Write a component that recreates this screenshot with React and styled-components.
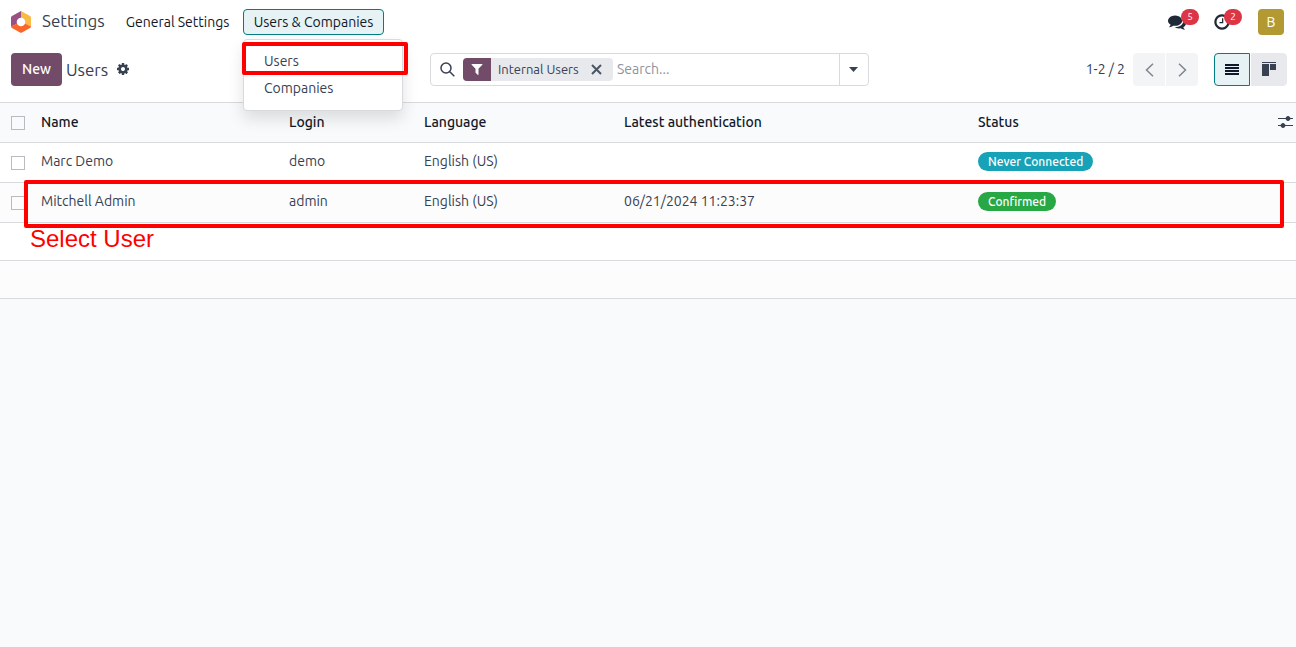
import React from 'react'
import styled, { createGlobalStyle } from 'styled-components'

const GlobalStyle = createGlobalStyle`
  * {
    box-sizing: border-box;
  }
  body {
    margin: 0;
    background: #f9fafc;
    color: #374151;
    font-family: Ubuntu, "Noto Sans", "Liberation Sans", sans-serif;
    font-size: 14px;
    line-height: 21px;
  }
  button,
  input {
    font: inherit;
    color: inherit;
  }
`

const Navbar = styled.header`
  display: flex;
  align-items: center;
  height: 44px;
  padding: 0 12px 0 11px;
  background: #fff;
`

const Brand = styled.a`
  display: flex;
  align-items: center;
  gap: 11px;
  width: 104px;
  font-size: 17px;
  line-height: 20px;
  color: #374151;
  text-decoration: none;
  white-space: nowrap;
`

const BrandName = styled.span`
  padding-bottom: 2px;
`

const NavMenu = styled.nav`
  display: flex;
  flex: 1;
  gap: 3px;
`

const NavItem = styled.div`
  position: relative;
`

const NavButton = styled.button`
  height: 26px;
  width: ${({ width }) => width};
  padding: 0;
  border: 1px solid ${({ $active }) => ($active ? '#017e84' : 'transparent')};
  border-radius: 4px;
  background: ${({ $active }) => ($active ? '#e6f2f3' : 'transparent')};
  color: #111827;
  line-height: 24px;
  white-space: nowrap;
`

const Dropdown = styled.div`
  position: absolute;
  z-index: 2;
  top: 30px;
  left: 0;
  width: 160px;
  padding: 8px 0;
  border: 1px solid #d8dadd;
  border-radius: 4px;
  background: #fff;
  box-shadow: 0 8px 16px rgba(0, 0, 0, 0.12);
`

const DropdownItem = styled.a`
  display: block;
  padding: 3px 20px;
  color: #374151;
  text-decoration: none;
`

const Marker = styled.div`
  position: absolute;
  z-index: 3;
  top: ${({ top }) => top};
  left: ${({ left }) => left};
  right: ${({ right }) => right};
  height: ${({ height }) => height};
  border: 4px solid #f00;
  border-radius: 2px;
  pointer-events: none;
`

const MarkerLabel = styled.div`
  position: absolute;
  left: 30px;
  top: 122px;
  color: #f00;
  font-family: "Liberation Sans", Arial, sans-serif;
  font-size: 24px;
  line-height: 28px;
`

const Systray = styled.div`
  display: flex;
  align-items: center;
`

const TrayButton = styled.button`
  position: relative;
  display: flex;
  align-items: center;
  width: 45px;
  height: 26px;
  padding: 0;
  border: 0;
  background: none;
  color: #1f2937;
`

const Counter = styled.span`
  position: absolute;
  top: 0;
  left: ${({ left }) => left};
  width: 18px;
  height: 16px;
  border-radius: 8px;
  background: #dc3545;
  color: #fff;
  font-size: 10px;
  line-height: 16px;
  text-align: center;
`

const Avatar = styled.button`
  width: 26px;
  height: 26px;
  padding: 0;
  border: 0;
  border-radius: 4px;
  background: #b39932;
  color: #fff;
`

const ControlPanel = styled.div`
  display: grid;
  grid-template-columns: minmax(0, 1fr) 439px minmax(0, 1fr);
  align-items: center;
  padding: 9px 8px 16px 11px;
  border-bottom: 1px solid #d8dadd;
  background: #fff;
`

const Breadcrumb = styled.div`
  display: flex;
  align-items: center;
`

const NewButton = styled.button`
  width: 51px;
  height: 33px;
  margin-right: 4px;
  padding: 0;
  border: 0;
  border-radius: 4px;
  background: #714b67;
  color: #fff;
  font-weight: 500;
`

const Title = styled.h1`
  margin: 0 8px 0 0;
  font-size: 17px;
  font-weight: 400;
`

const IconButton = styled.button`
  display: flex;
  padding: 0 0 1px;
  border: 0;
  background: none;
`

const SearchBox = styled.div`
  display: flex;
  align-items: center;
  height: 33px;
  border: 1px solid #d8dadd;
  border-radius: 4px;
  background: #fff;
`

const SearchIcon = styled.span`
  display: flex;
  padding: 0 8px 0 9px;
`

const Facet = styled.div`
  display: flex;
  align-items: center;
  height: 23px;
  width: 150px;
  border-radius: 4px;
  background: #e7e9ed;
  font-size: 13px;
  white-space: nowrap;
  overflow: hidden;
`

const FacetIcon = styled.span`
  display: flex;
  align-items: center;
  justify-content: center;
  width: 28px;
  height: 23px;
  margin-right: 7px;
  padding-bottom: 1px;
  background: #714b67;
  color: #fff;
`

const FacetLabel = styled.span`
  flex: 1;
`

const FacetRemove = styled(IconButton)`
  margin-right: 11px;
  padding: 0;
  color: #4b5563;
`

const SearchInput = styled.input`
  flex: 1;
  min-width: 0;
  height: 31px;
  padding: 0 4px 2px;
  border: 0;
  outline: 0;
  background: none;
  &::placeholder {
    color: #8f939b;
    opacity: 1;
  }
`

const SearchToggle = styled.button`
  display: flex;
  align-items: center;
  justify-content: center;
  width: 29px;
  height: 31px;
  padding: 0 1px 0 0;
  border: 0;
  border-left: 1px solid #d8dadd;
  background: none;
`

const PanelRight = styled.div`
  display: flex;
  align-items: center;
  justify-content: flex-end;
  padding-right: 1px;
`

const PagerValue = styled.span`
  margin-right: 8px;
`

const ButtonGroup = styled.div`
  display: flex;
  gap: 1px;
  margin-left: ${({ offset }) => offset};
`

const GroupButton = styled.button`
  display: flex;
  align-items: center;
  justify-content: center;
  width: ${({ width }) => width};
  height: 33px;
  padding: 0;
  border: 1px solid ${({ $active, tint }) => ($active ? '#017e84' : tint)};
  background: ${({ $active, tint }) => ($active ? '#e6f2f3' : tint)};
  color: ${({ color }) => color};
  &:first-child {
    border-radius: 4px 0 0 4px;
  }
  &:last-child {
    border-radius: 0 4px 4px 0;
  }
`

const ListView = styled.main`
  position: relative;
`

const Table = styled.table`
  width: 100%;
  table-layout: fixed;
  border-collapse: separate;
  border-spacing: 0;
`

const Col = styled.col`
  width: ${({ width }) => width};
`

const Row = styled.tr`
  height: ${({ height }) => height || '40px'};
  background: ${({ tint }) => tint || '#fff'};
  > * {
    border-bottom: 1px solid #d8dadd;
  }
`

const HeadCell = styled.th`
  padding: 0 5px;
  color: #111827;
  font-weight: 500;
  text-align: left;
`

const Cell = styled.td`
  padding: 0 5px 3px;
  white-space: nowrap;
`

const CheckCell = styled.td`
  padding: 0 0 0 11px;
`

const OptionsCell = styled.td`
  padding: 0;
`

const Checkbox = styled.input`
  appearance: none;
  display: block;
  width: 14px;
  height: 14px;
  margin: 0;
  border: 1px solid #b9bbc0;
  background: transparent;
`

const Badge = styled.span`
  display: block;
  width: fit-content;
  padding: 0 10px;
  border-radius: 10px;
  background: ${({ tint }) => tint};
  color: #fff;
  font-size: 12px;
  font-weight: 500;
  line-height: 19px;
`

const Glyph = ({ size, d }) => (
  <svg width={size} height={size} viewBox="0 0 1792 1792" fill="currentColor" aria-hidden="true">
    <path d={d} />
  </svg>
)

const icons = {
  comments:
    'M1408 768q0 139-94 257t-256.5 186.5-353.5 68.5q-86 0-176-16-124 88-278 128-36 9-86 16h-3q-11 0-20.5-8t-11.5-21q-1-3-1-6.5t.5-6.5 2-6l2.5-5 3.5-5.5 4-5 4.5-5 4-4.5q5-6 23-25t26-29.5 22.5-29 25-38.5 20.5-44q-124-72-195-177t-71-224q0-139 94-257t256.5-186.5 353.5-68.5 353.5 68.5 256.5 186.5 94 257zm384 256q0 120-71 224.5t-195 176.5q10 24 20.5 44t25 38.5 22.5 29 26 29.5 23 25q1 1 4 4.5t4.5 5 4 5 3.5 5.5l2.5 5 2 6 .5 6.5-1 6.5q-3 14-13 22t-22 7q-50-7-86-16-154-40-278-128-90 16-176 16-271 0-472-132 58 4 88 4 161 0 309-45t264-129q125-92 192-212t67-254q0-77-23-152 129 71 204 178t75 230z',
  clock:
    'M1024 544v448q0 14-9 23t-23 9h-320q-14 0-23-9t-9-23v-64q0-14 9-23t23-9h224v-352q0-14 9-23t23-9h64q14 0 23 9t9 23zm416 352q0-148-73-273t-198-198-273-73-273 73-198 198-73 273 73 273 198 198 273 73 273-73 198-198 73-273zm224 0q0 209-103 385.5t-279.5 279.5-385.5 103-385.5-103-279.5-279.5-103-385.5 103-385.5 279.5-279.5 385.5-103 385.5 103 279.5 279.5 103 385.5z',
  cog:
    'M1152 896q0-106-75-181t-181-75-181 75-75 181 75 181 181 75 181-75 75-181zm512-109v222q0 12-8 23t-20 13l-185 28q-19 54-39 91 35 50 107 138 10 12 10 25t-9 23q-27 37-99 108t-94 71q-12 0-26-9l-138-108q-44 23-91 38-16 136-29 186-7 28-36 28h-222q-14 0-24.5-8.5t-11.5-21.5l-28-184q-49-16-90-37l-141 107q-10 9-25 9-14 0-25-11-126-114-165-168-7-10-7-23 0-12 8-23 15-21 51-66.5t54-70.5q-27-50-41-99l-183-27q-13-2-21-12.5t-8-23.5v-222q0-12 8-23t19-13l186-28q14-46 39-92-40-57-107-138-10-12-10-24 0-10 9-23 26-36 98.5-107.5t94.5-71.5q13 0 26 10l138 107q44-23 91-38 16-136 29-186 7-28 36-28h222q14 0 24.5 8.5t11.5 21.5l28 184q49 16 90 37l142-107q9-9 24-9 13 0 25 10 129 119 165 170 7 8 7 22 0 12-8 23-15 21-51 66.5t-54 70.5q26 50 41 98l183 28q13 2 21 12.5t8 23.5z',
  filter:
    'M1595 295q17 41-14 70l-493 493v742q0 42-39 59-13 5-25 5-27 0-45-19l-256-256q-19-19-19-45v-486l-493-493q-31-29-14-70 17-39 59-39h1280q42 0 59 39z',
}

const Logo = () => (
  <svg width="20" height="22" viewBox="0 0 20 22" aria-hidden="true">
    <path d="M10 0 1 5Q0 5.500 0 6.500V15.500L10 11Z" fill="#985184" />
    <path d="M10 0 19 5Q20 5.500 20 6.500V15.500L10 11Z" fill="#fbb945" />
    <path d="M0 15.500Q0 16.500 1 17L9 21.500Q10 22 11 21.500L19 17Q20 16.500 20 15.500L13 12H7Z" fill="#fc6528" />
    <circle cx="10" cy="11" r="4.300" fill="#fff" />
  </svg>
)

const users = [
  {
    name: 'Marc Demo',
    login: 'demo',
    language: 'English (US)',
    latest: '',
    status: 'Never Connected',
    tint: '#17a2b8',
  },
  {
    name: 'Mitchell Admin',
    login: 'admin',
    language: 'English (US)',
    latest: '06/21/2024 11:23:37',
    status: 'Confirmed',
    tint: '#28a745',
  },
]

const TopBar = () => (
  <Navbar>
    <Brand href="#">
      <Logo />
      <BrandName>Settings</BrandName>
    </Brand>
    <NavMenu>
      <NavItem>
        <NavButton width="125px">General Settings</NavButton>
      </NavItem>
      <NavItem>
        <NavButton width="141px" $active aria-expanded="true">Users &amp; Companies</NavButton>
        <Dropdown>
          <DropdownItem href="#">Users</DropdownItem>
          <DropdownItem href="#">Companies</DropdownItem>
          <Marker top="2px" left="-2px" right="-6px" height="33px" />
        </Dropdown>
      </NavItem>
    </NavMenu>
    <Systray>
      <TrayButton aria-label="Messages">
        <Glyph size={18} d={icons.comments} />
        <Counter left="13px">5</Counter>
      </TrayButton>
      <TrayButton aria-label="Activities">
        <Glyph size={18} d={icons.clock} />
        <Counter left="11px">2</Counter>
      </TrayButton>
      <Avatar>B</Avatar>
    </Systray>
  </Navbar>
)

const Search = () => (
  <SearchBox>
    <SearchIcon>
      <svg width="15" height="15" viewBox="0 0 15 15" fill="none" stroke="#374151" strokeWidth="1.500">
        <circle cx="6" cy="6" r="5" />
        <path d="m9.500 9.500 4.800 4.800" />
      </svg>
    </SearchIcon>
    <Facet>
      <FacetIcon>
        <Glyph size={14} d={icons.filter} />
      </FacetIcon>
      <FacetLabel>Internal Users</FacetLabel>
      <FacetRemove aria-label="Remove">
        <svg width="11" height="11" viewBox="0 0 11 11" stroke="currentColor" strokeWidth="2">
          <path d="m1 1 9 9M10 1l-9 9" />
        </svg>
      </FacetRemove>
    </Facet>
    <SearchInput placeholder="Search..." aria-label="Search" />
    <SearchToggle aria-label="Toggle search panel">
      <svg width="9" height="5" viewBox="0 0 9 5" fill="#374151">
        <path d="M0 0h9L4.500 5z" />
      </svg>
    </SearchToggle>
  </SearchBox>
)

const Pager = () => (
  <>
    <PagerValue>1-2 / 2</PagerValue>
    <ButtonGroup>
      <GroupButton width="32px" tint="#f3f4f6" color="#7f848d" aria-label="Previous">
        <svg width="9" height="14" viewBox="0 0 9 14" fill="none" stroke="currentColor" strokeWidth="1.500">
          <path d="M8 .7 1.500 7 8 13.300" />
        </svg>
      </GroupButton>
      <GroupButton width="32px" tint="#f3f4f6" color="#7f848d" aria-label="Next">
        <svg width="9" height="14" viewBox="0 0 9 14" fill="none" stroke="currentColor" strokeWidth="1.500">
          <path d="M1 .7 7.500 7 1 13.300" />
        </svg>
      </GroupButton>
    </ButtonGroup>
  </>
)

const ViewSwitcher = () => (
  <ButtonGroup offset="16px">
    <GroupButton width="36px" $active color="#111827" aria-label="List view">
      <svg width="14" height="11" viewBox="0 0 14 11" fill="currentColor">
        <path d="M0 0h14v2H0zM0 3h14v2H0zM0 6h14v2H0zM0 9h14v2H0z" />
      </svg>
    </GroupButton>
    <GroupButton width="36px" tint="#e7e9ed" color="#374151" aria-label="Kanban view">
      <svg width="14" height="15" viewBox="0 0 14 15" fill="currentColor">
        <path d="M0 0h14v1H0zM0 2h7v12H0zM8 2h6v6H8z" />
      </svg>
    </GroupButton>
  </ButtonGroup>
)

const UserList = () => (
  <ListView>
    <Table>
      <colgroup>
        <Col width="36px" />
        <Col width="248px" />
        <Col width="135px" />
        <Col width="200px" />
        <Col width="354px" />
        <Col />
        <Col width="18px" />
      </colgroup>
      <thead>
        <Row tint="#f9fafc">
          <CheckCell>
            <Checkbox type="checkbox" aria-label="Select all" />
          </CheckCell>
          <HeadCell>Name</HeadCell>
          <HeadCell>Login</HeadCell>
          <HeadCell>Language</HeadCell>
          <HeadCell>Latest authentication</HeadCell>
          <HeadCell>Status</HeadCell>
          <OptionsCell>
            <IconButton aria-label="Optional columns">
              <svg width="15" height="12" viewBox="0 0 15 12" stroke="#374151" fill="#374151">
                <path d="M0 2.500h15M0 9.500h15" />
                <circle cx="10" cy="2.500" r="2" />
                <circle cx="5" cy="9.500" r="2" />
              </svg>
            </IconButton>
          </OptionsCell>
        </Row>
      </thead>
      <tbody>
        {users.map((user, index) => (
          <Row key={user.login} tint={index % 2 ? '#fcfcfc' : '#fff'}>
            <CheckCell>
              <Checkbox type="checkbox" aria-label={`Select ${user.name}`} />
            </CheckCell>
            <Cell>{user.name}</Cell>
            <Cell>{user.login}</Cell>
            <Cell>{user.language}</Cell>
            <Cell>{user.latest}</Cell>
            <Cell>
              <Badge tint={user.tint}>{user.status}</Badge>
            </Cell>
            <OptionsCell />
          </Row>
        ))}
        <Row height="38px">
          <Cell colSpan={7} />
        </Row>
        <Row height="38px" tint="#fcfcfc">
          <Cell colSpan={7} />
        </Row>
      </tbody>
    </Table>
    <Marker top="77px" left="24px" right="12px" height="48px" />
    <MarkerLabel>Select User</MarkerLabel>
  </ListView>
)

const App = () => (
  <>
    <GlobalStyle />
    <TopBar />
    <ControlPanel>
      <Breadcrumb>
        <NewButton>New</NewButton>
        <Title>Users</Title>
        <IconButton aria-label="Actions">
          <Glyph size={14} d={icons.cog} />
        </IconButton>
      </Breadcrumb>
      <Search />
      <PanelRight>
        <Pager />
        <ViewSwitcher />
      </PanelRight>
    </ControlPanel>
    <UserList />
  </>
)

export default App
